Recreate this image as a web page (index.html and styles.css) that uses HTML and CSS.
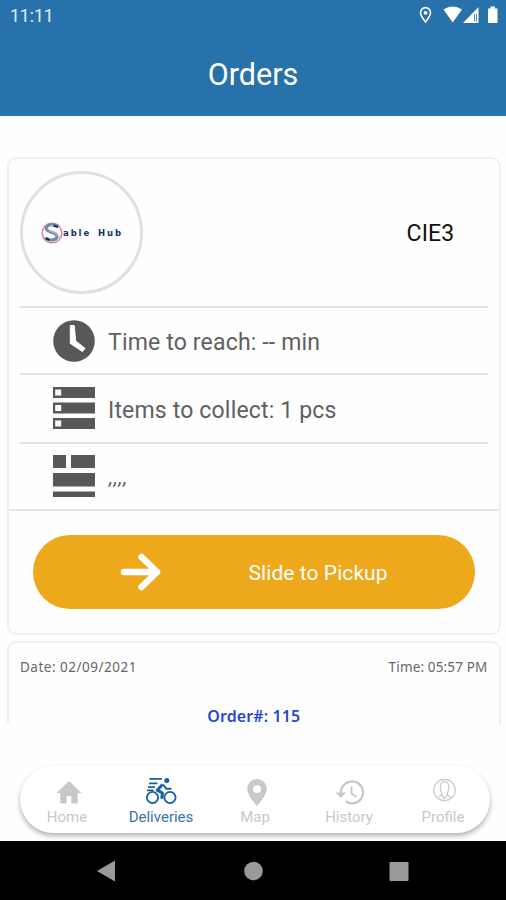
FILE: index.html
```html
<!DOCTYPE html>
<html lang="en">
<head>
<meta charset="utf-8">
<title>Orders</title>
<link rel="stylesheet" href="styles.css">
</head>
<body>
<div class="phone">
  <header class="header">
    <div class="status">
      <span class="clock">11:11</span>
      <svg class="status-icons" width="84" height="24" viewBox="0 0 84 24">
        <path d="M10.500 7.600a5 5 0 0 1 5 5c0 3.400-5 9.300-5 9.300s-5-5.900-5-9.300a5 5 0 0 1 5-5z" fill="none" stroke="#fff" stroke-width="1.600"/>
        <circle cx="10.500" cy="12.800" r="1.900" fill="#fff"/>
        <path d="M28.500 9.500Q37.500 3.500 47 9.500L37.700 22.500z" fill="#fff"/>
        <path d="M63.500 7v16H48z" fill="#fff"/>
        <path d="M59.500 14v7.500M61.500 14v7.500" stroke="#2872ab" stroke-width=".8"/>
        <path d="M73 8.500h2.500v-2h4.500v2h2.500v14.500h-9.500z" fill="#fff"/>
      </svg>
    </div>
    <h1 class="title">Orders</h1>
  </header>

  <main class="list">
    <section class="card">
      <div class="vendor">
        <div class="avatar">
          <svg class="mark" width="22" height="22" viewBox="0 0 22 22">
            <circle cx="11" cy="11" r="9.800" fill="none" stroke="#d08a98" stroke-width="1.500"/>
            <path d="M17.500 4.700C12 1.500 4.500 3 5.500 7c.8 3.400 10 3 10.500 7 .4 3.700-6 5.500-11 2.500" fill="none" stroke="#7386a6" stroke-width="3.200"/>
            <path d="M17.500 4.700C13 3 6.500 3.500 7 7c.6 3 9 3 9.300 7" fill="none" stroke="#dce3ee" stroke-width=".8"/>
            <path d="M12.500 3.500l4.500 1.500M4.500 16l4 2" stroke="#1a2a55" stroke-width="2.200"/>
          </svg>
          <span class="brand">able Hub</span>
        </div>
        <span class="code">CIE3</span>
      </div>
      <div class="row row-time">
        <svg class="row-icon" width="42" height="42" viewBox="0 0 42 42">
          <circle cx="21" cy="21" r="20.800" fill="#585858"/>
          <path d="M17.300 5.500h3.900l1.500 15.500 9.300 7.300-2.600 3.300-12.100-8.200z" fill="#fff" stroke="#fff" stroke-width="1" stroke-linejoin="round"/>
        </svg>
        <span>Time to reach: -- min</span>
      </div>
      <div class="row row-items">
        <svg class="row-icon" width="42" height="42" viewBox="0 0 42 42">
          <path d="M0 0h42v11H0zM0 15.500h42v11H0zM0 31h42v11H0z" fill="#585858"/>
          <path d="M2.200 2.500h6v6h-6zM2.200 18h6v6h-6zM2.200 33.500h6v6h-6z" fill="#fff"/>
        </svg>
        <span>Items to collect: 1 pcs</span>
      </div>
      <div class="row row-address">
        <svg class="row-icon" width="42" height="42" viewBox="0 0 42 42">
          <path d="M0 0h13v13H0zM18 0h24v13H18zM0 18h42v13.500H0zM0 36.500h42v5.500H0z" fill="#585858"/>
        </svg>
        <span class="commas">,,,,</span>
      </div>
      <div class="action">
        <div class="slide">
          <svg class="arrow" width="42" height="38" viewBox="0 0 42 38">
            <path d="M4 19h33M21.500 4L37 19 21.500 34" fill="none" stroke="#fff" stroke-width="6.500" stroke-linecap="round" stroke-linejoin="round"/>
          </svg>
          <span class="slide-text">Slide to Pickup</span>
        </div>
      </div>
    </section>

    <section class="card card-next">
      <div class="meta"><span class="date">Date: 02/09/2021</span><span class="time">Time: 05:57 PM</span></div>
      <div class="order">Order#: 115</div>
    </section>
  </main>

  <div class="dock">
    <nav class="tabs">
      <div class="tab">
        <svg width="32" height="30" viewBox="0 0 32 30"><path d="M18 5L30.500 17h-3.800v10.500h-6.400v-7.500h-4.600v7.500H9.300V17H5.500z" fill="#c8c8c8"/></svg>
        <span class="home">Home</span>
      </div>
      <div class="tab active">
        <svg width="32" height="30" viewBox="0 0 32 30" fill="none" stroke="#155f9f">
          <circle cx="7.500" cy="21.500" r="5.600" stroke-width="1.800"/>
          <circle cx="25" cy="21.500" r="5.600" stroke-width="1.800"/>
          <circle cx="21.800" cy="4.500" r="2.500" fill="#155f9f" stroke="none"/>
          <path d="M17.500 8.500l-5.300 5.700 5.300 2.800-.8 5.800" stroke-width="3" stroke-linejoin="round"/>
          <path d="M18 8.500l3.300 4.200h5.200" stroke-width="1.900"/>
          <path d="M4.500 2.800h12.500M4 7.300h8.500M3 11.200h7M2 14.300h6.500" stroke-width="1.800"/>
        </svg>
        <span class="deliveries">Deliveries</span>
      </div>
      <div class="tab">
        <svg width="32" height="30" viewBox="0 0 32 30"><path d="M18 3a9.800 9.800 0 0 1 9.800 9.800C27.800 19.500 18 30 18 30S8.200 19.500 8.200 12.800A9.800 9.800 0 0 1 18 3zm0 6a4 4 0 1 0 0 8 4 4 0 0 0 0-8z" fill="#c8c8c8"/></svg>
        <span class="map">Map</span>
      </div>
      <div class="tab">
        <svg width="32" height="30" viewBox="0 0 32 30" fill="none" stroke="#c8c8c8">
          <path d="M8 18V17a11 11 0 1 1 4.500 8.300" stroke-width="2.300"/>
          <path d="M2.500 16.500h10.500l-5.200 5.300z" fill="#c8c8c8" stroke="none"/>
          <path d="M18.500 10.500v7l5 3.500" stroke-width="1.900"/>
        </svg>
        <span class="history">History</span>
      </div>
      <div class="tab">
        <svg width="32" height="30" viewBox="0 0 32 30" fill="none" stroke="#c8c8c8" stroke-width="1.200">
          <circle cx="17.500" cy="14" r="10.700"/>
          <path d="M10.500 21.500c1.500-1.300 3.800-1.500 4.200-3 .4-1.500-1.500-3.200-1.500-7.200 0-3.800 1.600-5.600 4.300-5.600s4.300 1.800 4.300 5.600c0 4-1.900 5.700-1.500 7.200.4 1.500 2.700 1.700 4.200 3M15 18.500c.2 1.800 1.200 2.600 2.500 4 1.300-1.400 2.300-2.200 2.500-4"/>
        </svg>
        <span class="profile">Profile</span>
      </div>
    </nav>
  </div>

  <footer class="system">
    <svg width="506" height="59" viewBox="0 0 506 59" fill="#999">
      <path d="M97 30l18-10.500v21z"/>
      <circle cx="253.500" cy="30" r="9.300"/>
      <rect x="389.500" y="21" width="19" height="19" rx="1"/>
    </svg>
  </footer>
</div>
</body>
</html>
```
FILE: styles.css
```css
* { box-sizing: border-box; }
body { margin: 0; background: #fff; font-family: Roboto, "Liberation Sans", sans-serif; }
svg { display: block; flex: none; }
.phone { width: 506px; height: 900px; display: flex; flex-direction: column; background: #fefefe; }

.header { height: 116px; flex: none; background: #2872ab; color: #fff; }
.status { height: 32px; display: flex; justify-content: space-between; padding: 0 7px 0 10px; }
.clock { font-size: 17.500px; line-height: 32px; color: #e4eef6; }
.title { margin: 22px 0 0; text-align: center; font-size: 30.500px; line-height: 42px; font-weight: 400; }

.list { height: 608px; flex: none; padding: 41px 5.500px 0 7px; }
.card { height: 478px; border: 2px solid #f0f0f0; border-radius: 9px; background: #fefefe; }
.card-next { margin-top: 6px; height: 83px; border-bottom: 0; border-radius: 9px 9px 0 0; }
.vendor { height: 147px; margin: 0 11px; display: flex; align-items: center; justify-content: space-between; padding-right: 33px; }
.avatar { width: 123px; height: 123px; border: 3.500px solid #e0e0e0; border-radius: 50%; display: flex; align-items: center; padding-left: 18px; }
.brand { font-family: "DejaVu Sans", sans-serif; font-weight: 700; font-size: 8.500px; letter-spacing: 1.900px; color: #15316b; white-space: nowrap; word-spacing: 2px; }
.code { font-size: 23px; color: #111; padding-top: 2px; letter-spacing: .2px; }
.row { margin: 0 11px; padding-left: 33px; border-top: 2px solid #e3e3e3; display: flex; align-items: center; gap: 13px; font-size: 23px; color: #606060; white-space: nowrap; letter-spacing: .17px; }
.row > span { padding-top: 3px; }
.row-time { height: 67px; }
.row-items { height: 69px; }
.row-address { height: 67px; }
.row-address .row-icon { margin-bottom: 2px; }
.row-items .row-icon { margin-bottom: 1px; }
.row .commas { font-size: 20px; font-style: italic; letter-spacing: .9px; padding-left: 1px; padding-top: 1px; }
.action { border-top: 2px solid #e6e6e6; padding: 24px 23.500px 0; }
.slide { height: 74px; border-radius: 37px; background: #eea81c; color: #fff; display: flex; align-items: center; padding-left: 87px; }
.slide-text { margin-left: 87px; padding-top: 2px; font-size: 21px; letter-spacing: .07px; white-space: nowrap; }

.meta { display: flex; justify-content: space-between; padding: 14px 11px 0; font-family: "Noto Sans", sans-serif; font-size: 13.500px; line-height: 20px; color: #666; }
.date { letter-spacing: .5px; }
.time { letter-spacing: .15px; }
.order { margin-top: 31px; text-align: center; font-family: "Noto Sans", sans-serif; font-size: 16px; line-height: 16px; font-weight: 600; letter-spacing: .1px; color: #2947cf; }

.dock { height: 117px; flex: none; padding: 42px 16px 0 20px; }
.tabs { height: 67px; border-radius: 34px; background: #fff; display: flex; padding: 10px 0 0; box-shadow: 0 3px 5px rgba(0,0,0,.3); }
.tab { flex: 1; display: flex; flex-direction: column; align-items: center; font-size: 15px; line-height: 18px; color: #c8c8c8; }
.tab > span { margin-top: 2px; }
.active { color: #3972ae; }

.system { height: 59px; flex: none; background: #000; }
```
